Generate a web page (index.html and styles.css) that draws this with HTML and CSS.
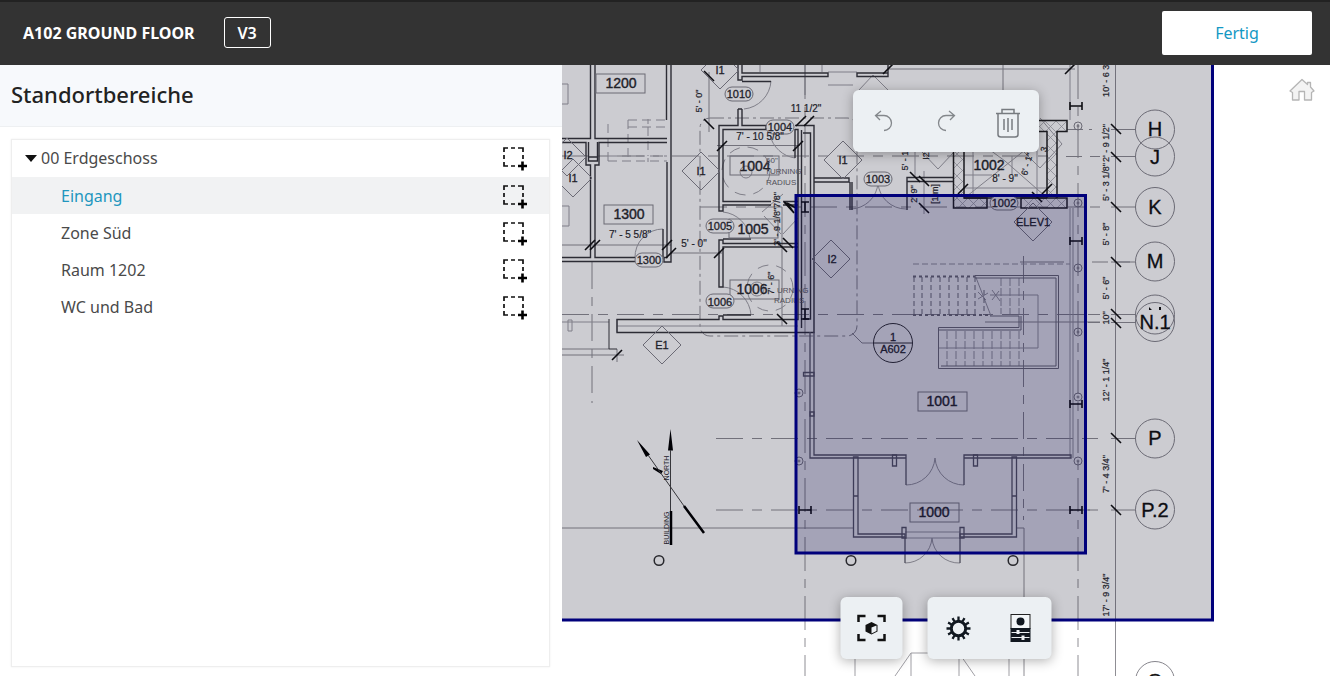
FILE: index.html
```html
<!DOCTYPE html>
<html lang="de">
<head>
<meta charset="utf-8">
<title>A102 Ground Floor</title>
<link rel="stylesheet" href="styles.css">
</head>
<body>
<svg class="defs" aria-hidden="true">
  <symbol id="area" viewBox="0 0 26 26">
    <path d="M2 7V3h4M9 3h4M16 3h5v4M21 10v4M2 10v4M2 17v4h4M9 21h4" fill="none" stroke="#111" stroke-width="1.700"/>
    <path d="M20.500 16.500v9M16 21h9" stroke="#000" stroke-width="2.600"/>
  </symbol>
</svg>
<div class="app">
  <header class="topbar">
    <h1 class="sheet">A102 GROUND FLOOR</h1>
    <button class="version" type="button">V3</button>
    <button class="done" type="button">Fertig</button>
  </header>
  <main class="work">
    <section class="side">
      <h2 class="side-title">Standortbereiche</h2>
      <ul class="tree">
        <li class="row root"><svg class="caret" viewBox="0 0 12 8"><path d="M0 1h12L6 8z"/></svg><span class="name">00 Erdgeschoss</span><button class="add" type="button" aria-label="Bereich zeichnen"><svg><use href="#area"/></svg></button></li>
        <li class="row selected"><span class="name">Eingang</span><button class="add" type="button" aria-label="Bereich zeichnen"><svg><use href="#area"/></svg></button></li>
        <li class="row"><span class="name">Zone Süd</span><button class="add" type="button" aria-label="Bereich zeichnen"><svg><use href="#area"/></svg></button></li>
        <li class="row"><span class="name">Raum 1202</span><button class="add" type="button" aria-label="Bereich zeichnen"><svg><use href="#area"/></svg></button></li>
        <li class="row"><span class="name">WC und Bad</span><button class="add" type="button" aria-label="Bereich zeichnen"><svg><use href="#area"/></svg></button></li>
      </ul>
    </section>
    <section class="viewer">
      <svg class="plan" viewBox="562 65 768 611" preserveAspectRatio="xMinYMin slice">
        <defs>
          <path id="dia" d="M0-19L19 0L0 19L-19 0z"/>
          <path id="tick" d="M-5-5L5 5"/>
          <path id="slash" d="M-5 5L5-5"/>
          <rect id="pill" x="-14" y="-7" width="28" height="14" rx="7"/>
          <rect id="tag" x="-24" y="-10" width="49" height="19"/>
          <path id="beam" d="M-6 0H6M-6-4V4M6-4V4"/>
          <g id="bolt"><circle r="4"/><circle r="1"/></g>
          <pattern id="hatch" width="11" height="11" patternUnits="userSpaceOnUse"><path d="M0 0L11 11M11 0L0 11" stroke="#a3a2a8" stroke-width=".7"/></pattern>
        </defs>

        <g class="grid">
          <path d="M562 156H1048M700 207H1048M562 314.500H1090M716 438.500H1090M716 510H1090" stroke-dasharray="27 9 10 9"/>
          <path d="M805 65V676M1078 65V676" stroke-dasharray="34 8 9 8"/>
          <path d="M592 262V403M1023.500 256V520" stroke-dasharray="27 8 9 8"/>
          <path d="M985 322H1100M1020 262H1064"/>
          <path d="M1067 129.500H1092M1066 156.500H1083M1090 156.500H1100M1068 207H1100M1092 262H1136M1066 314.500H1100M1088 322.500H1100M1088 438.500H1098M1088 510H1098" stroke-dasharray="16 6"/>
          <path d="M1111 129.500H1136M1111 156.500H1136M1111 207H1136M1111 262H1136M1111 314.500H1136M1111 322.500H1136M1111 438.500H1136M1111 510H1136M1115.500 65V676"/>
          <path d="M562 245H671M671 253H722M709 72V132M717 145.500H800M782 207V326M888 69H1075M1003 65V90M805 65V95M562 528H853M1016 528H1024M562 349H609M562 355H624M617 349V362"/>
          <path d="M1024 528V676"/>
          <rect x="700" y="118" width="157" height="218" rx="10" stroke-dasharray="14 4 3 4"/>
          <path d="M852 333L862 343H873"/>
        </g>

        <g class="thin">
          <path d="M562 84H568V104H562M562 206H569V226H562"/>
          <path d="M608 124V161M608 156H667M628 120V161M648 119V124M648 127V156M648 158V162M628 120H667M628 127H667M608 161H667" stroke-dasharray="9 5"/>
          <path d="M760 65V72M822 65V72"/>
          <path d="M771 81A30 30 0 0 1 744 109M663 229A28 28 0 0 0 635 258M795 158A30 30 0 0 1 770 135M723 212A30 30 0 0 1 750 239M723 287A30 30 0 0 1 751 315"/>
          <circle cx="746" cy="171" r="24" stroke-dasharray="11 8"/>
          <circle cx="746" cy="172" r="6"/>
          <circle cx="770" cy="288" r="23" stroke-dasharray="11 8"/>
          <circle cx="757" cy="289" r="7"/>
          <path d="M762 212L783 194M764 216L781 234M783 234L798 218"/>
          <path d="M878 183A28 28 0 0 1 851 209M878 183A28 28 0 0 0 906 209"/>
          <path d="M828 72H857M828 85H853M859 90L873 75L888 90M915 152V176M922 152L938 169L953 153"/>
          <path d="M924 171V214M973 150V198M1037 132V198M964 188H1047M964 175H992M1012 156V175M967 196L1025 150M1045 196L1005 161L990 150M1040 118L1062 144L1040 168L1022 150"/>
          <path d="M617 326H798M617 332V319M562 322H609M568 320H572V331H568z"/>
          <path d="M1070 65V120M1070 208V458M1073 208V458"/>
          <path d="M913 264H1070" stroke-dasharray="6 3"/>
          <path d="M990 295H1038V348H938M975 275L991 316M978 292L986 300M978 299L988 293M992 290L1000 301M992 300L999 291"/>
          <path d="M1001 278V314M1010 278V314M1019 278V314M947 331V366M956 331V366M965 331V366M974 331V366M983 331V366M992 331V366M1001 331V366M1010 331V366M1019 331V366" stroke-dasharray="8 2"/>
          <path d="M906 485A29 29 0 0 0 935 458A29 29 0 0 0 964 485M905 563A27 27 0 0 0 932 538A27 27 0 0 0 960 563M905 532H960M905 538H960"/>
          <path d="M855 659V676M911 653V676M959 653V676M895 676L911 653H959L975 676M1009 659V676"/>
        </g>

        <g class="stair">
          <path d="M975 275.500H1058.500V368.500H938.500V327.500H1019V316H990M975 278H1056V366H941M938 330H1021V316"/>
          <path d="M914 277V315M922 277V315M931 277V315M940 277V315M949 277V315M958 277V315M967 277V315M975 277V315M984 290V315" stroke-dasharray="5 3"/>
          <path d="M913 276.500H975M913 315H991" stroke-dasharray="3 3" stroke-width="2"/>
        </g>

        <g class="wall">
          <path d="M590.500 65V138.500H562M595 65V138.500H667M666.500 65V120M671 65V262H664V257.500H667V162"/>
          <path d="M562 142.500H586V165H590.500V257.500H562M667 142.500H599V165H595V257.500H635M562 261.500H635M663 229V257"/>
          <path d="M588.500 142V161H597.500V142M589 157H597"/>
          <path d="M738 65V80H742V76.500H828V73H742V65M742 81.500H771M888 65V76.500H857V73H888"/>
          <path d="M738 109V125.500H719V211H723V205H771M742 109V125.500H766V129.500H723V201.500H771M738 109H742M795 125.500H814V332.500H617V319.500H719V316H723V319.500H798V129.500H795M795 129V158M783 201.500H798M783 205H798"/>
          <path d="M801.500 130V328M803 133H810.500V319H803M798 243.500H723V240H719V287H723V247H798M723 239H751M723 315H751"/>
          <path d="M814 178H849V182H814M850 182V210M852 182V210M907 181V210M953 177.500H907V181.500H953"/>
          <path d="M609 319V349H617" stroke-width="1"/>
        </g>
        <g class="shaft">
          <path d="M953.500 150H964V198H987V208H953.500zM1021 198H1067V208H1021zM1037 120.500H1067V131.500H1057V198H1047V131.500H1037z"/>
          <path d="M964 198H1047"/>
        </g>

        <g class="entry">
          <path d="M810 332V458H906V455H814V332M964 455H1071V458H964zM906 455V485M964 455V485"/>
          <path d="M853.500 457V537H905V534H858V457zM1012 457V534H960V537H1016.500V457zM853 496H858M1012 496H1016M905 538V563M960 538V563"/>
          <path d="M892.500 455H896.500V466H892.500zM973.500 455H977.500V466H973.500zM902 527.500H906V538H902zM960 527.500H964V538H960zM803.500 372.500H814V376H803.500zM810 412H814V416H810z"/>
        </g>

        <g class="mark">
          <use href="#dia" x="567" y="157"/><use href="#dia" x="573" y="178"/><use href="#dia" x="701" y="171"/><use href="#dia" x="720" y="70"/><use href="#dia" x="843" y="160"/><use href="#dia" x="831" y="259"/><use href="#dia" x="662" y="345"/><use href="#dia" x="1033" y="222"/>
          <use href="#tag" x="620" y="84"/><use href="#tag" x="628" y="215"/><use href="#tag" x="754" y="166"/><use href="#tag" x="753" y="229"/><use href="#tag" x="754" y="290"/><use href="#tag" x="942" y="402"/><use href="#tag" x="934" y="513"/>
          <g class="filled"><use href="#pill" x="739" y="94"/><use href="#pill" x="780" y="127"/><use href="#pill" x="649" y="260"/><use href="#pill" x="720" y="226"/><use href="#pill" x="720" y="301"/><use href="#pill" x="878" y="179"/><use href="#pill" x="1004" y="203"/></g>
          <circle cx="893" cy="343" r="19.500" stroke="#333"/><path d="M873 343H912" stroke="#333"/>
          <use href="#bolt" x="1078" y="126"/><use href="#bolt" x="1078" y="203"/><use href="#bolt" x="1078" y="268"/><use href="#bolt" x="1078" y="332"/><use href="#bolt" x="1078" y="397"/><use href="#bolt" x="1078" y="461"/><use href="#bolt" x="799" y="393"/><use href="#bolt" x="799" y="461"/>
          <circle cx="1155" cy="129.500" r="19.500"/><circle cx="1155" cy="156.500" r="19.500"/><circle cx="1155" cy="207" r="19.500"/><circle cx="1155" cy="261.500" r="19.500"/><circle cx="1155" cy="314.500" r="19.500"/><circle cx="1155" cy="322" r="19.500"/><circle cx="1155" cy="438.500" r="19.500"/><circle cx="1155" cy="509.500" r="19.500"/><circle cx="1155" cy="681" r="19.500"/>
        </g>

        <g class="ticks">
          <use href="#slash" x="590" y="245"/><use href="#slash" x="595" y="245"/><use href="#slash" x="667" y="245"/><use href="#slash" x="671" y="253"/><use href="#slash" x="719" y="253"/><use href="#slash" x="722" y="146"/><use href="#slash" x="798" y="146"/><use href="#slash" x="801" y="121"/><use href="#slash" x="809" y="121"/><use href="#slash" x="617" y="355"/><use href="#slash" x="888" y="69"/><use href="#slash" x="1070" y="69"/><use href="#slash" x="963" y="189"/><use href="#slash" x="1047" y="189"/>
          <use href="#tick" x="709" y="76"/><use href="#tick" x="709" y="124"/><use href="#tick" x="782" y="247"/><use href="#tick" x="788" y="243"/><use href="#tick" x="782" y="319"/><use href="#tick" x="915" y="177"/><use href="#tick" x="924" y="181"/><use href="#tick" x="924" y="208"/><use href="#tick" x="1037" y="197"/>
          <use href="#tick" x="1116" y="129"/><use href="#tick" x="1116" y="157"/><use href="#tick" x="1116" y="207"/><use href="#tick" x="1116" y="262"/><use href="#tick" x="1116" y="314"/><use href="#tick" x="1116" y="323"/><use href="#tick" x="1116" y="438"/><use href="#tick" x="1116" y="510"/>
          <use href="#beam" x="1076" y="106"/><use href="#beam" x="1076" y="241"/><use href="#beam" x="1076" y="404"/><use href="#beam" x="1076" y="510"/><use href="#beam" x="805" y="510"/>
          <path d="M801 202H809M801 212H809M805 202V212M801 309H809M801 319H809M805 309V319"/>
          <path d="M784 202L796 208L787 203L794 213z" fill="#111"/>
        </g>

        <g class="north">
          <path d="M670.500 429L668 450.500H673zM637 440L646 457L650 454.500zM653 467L663 471L661 474L653 469z"/>
          <path d="M670.500 450V512M648 455L684 506" stroke="#444"/>
          <path d="M671 511V545M684 506L704 533" stroke="#000" stroke-width="2.500"/>
        </g>
        <g fill="none" stroke="#333" stroke-width="1.500"><circle cx="659" cy="560.500" r="4.800"/><circle cx="851" cy="560.500" r="4.800"/><circle cx="1013" cy="560.500" r="4.800"/></g>

        <g class="room">
          <text x="621" y="88">1200</text><text x="629" y="219">1300</text><text x="755" y="171">1004</text><text x="753" y="234">1005</text><text x="752" y="294">1006</text><text x="989" y="170">1002</text><text x="942" y="406">1001</text><text x="934" y="517">1000</text>
        </g>
        <g class="code">
          <text x="739" y="98">1010</text><text x="780" y="131">1004</text><text x="649" y="264">1300</text><text x="720" y="230">1005</text><text x="720" y="306">1006</text><text x="878" y="183">1003</text><text x="1004" y="207">1002</text>
          <text x="568" y="159">I2</text><text x="573" y="182">I1</text><text x="701" y="175">I1</text><text x="720" y="74">I1</text><text x="843" y="164">I1</text><text x="832" y="263">I2</text><text x="662" y="349">E1</text><text x="1033" y="226">ELEV1</text><text x="893" y="341">1</text><text x="893" y="353">A602</text>
        </g>
        <g class="dim">
          <text x="630" y="238">7' - 5 5/8"</text><text x="694" y="247">5' - 0"</text><text x="760" y="140">7' - 10 5/8"</text><text x="806" y="112">11 1/2"</text><text x="1005" y="182">8' - 9"</text>
        </g>
        <g class="turn">
          <text x="766" y="163">60"</text><text x="765" y="174">TURNING</text><text x="766" y="185">RADIUS</text><text x="777" y="293">URNING</text><text x="774" y="303">RADIUS</text>
        </g>
        <g class="dim upright">
          <text transform="translate(702 101) rotate(-90)">5' - 0"</text><text transform="translate(780 219) rotate(-90)">3' - 9 1/8"7/8"</text><text transform="translate(774 283) rotate(-90)">7' - 6"</text><text transform="translate(908 159) rotate(-90)">5' - 1"</text><text transform="translate(917 194) rotate(-90)">2' 9"</text><text transform="translate(938 194) rotate(-90)">[1 m]</text><text transform="translate(929 156) rotate(-90)">I2</text><text transform="translate(1030 165) rotate(-75)">6' - 1"</text><text transform="translate(1047 150) rotate(-75)">3</text>
          <text transform="translate(1109 77) rotate(-90)">10' - 6 3/8</text><text transform="translate(1109 143) rotate(-90)">2' - 9 1/2"</text><text transform="translate(1109 182) rotate(-90)">5' - 3 1/8"</text><text transform="translate(1109 234) rotate(-90)">5' - 8"</text><text transform="translate(1109 288) rotate(-90)">5' - 6"</text><text transform="translate(1109 318) rotate(-90)">10"</text><text transform="translate(1109 380) rotate(-90)">12' - 1 1/4"</text><text transform="translate(1109 474) rotate(-90)">7' - 4 3/4"</text><text transform="translate(1109 595) rotate(-90)">17' - 9 3/4"</text>
        </g>
        <g class="compass"><text transform="translate(669 468) rotate(-90)">NORTH</text><text transform="translate(669 528) rotate(-90)">BUILDING</text></g>
        <g class="axis">
          <text x="1155" y="136">H</text><text x="1155" y="164">J</text><text x="1155" y="214">K</text><text x="1155" y="268">M</text><text x="1155" y="329">N.1</text><text x="1155" y="445">P</text><text x="1155" y="517">P.2</text><text x="1155" y="688">Q</text>
        </g>
        <path d="M1149 310V307L1152 310zM1159 307H1161V310H1159z" fill="#111"/>

        <rect class="zone outer" x="500" y="40" width="712.500" height="580"/>
        <rect class="zone inner" x="796" y="195.500" width="289.500" height="357.500"/>
      </svg>

      <button class="home" type="button" aria-label="Startansicht"><svg viewBox="0 0 26 24"><path d="M13 1.500L1 13L3.500 14.500V22H10V13.500H15.500V22H22.500V14.500L25 13L21.500 9V4.500H18.500V6.500z" fill="#f3f3f3" stroke="#b5b5b5" stroke-width="1.300" stroke-linejoin="round"/></svg></button>

      <div class="tools top">
        <button type="button" aria-label="Rückgängig"><svg viewBox="0 0 30 30"><path d="M6.500 9.500H15A7.500 7.500 0 0 1 15 24.500M12 5L6.500 9.500L11 14" fill="none" stroke="#83878b" stroke-width="1.300"/></svg></button>
        <button type="button" aria-label="Wiederholen"><svg viewBox="0 0 30 30"><path d="M23.500 9.500H15A7.500 7.500 0 0 0 15 24.500M18 5L23.500 9.500L19 14" fill="none" stroke="#83878b" stroke-width="1.300"/></svg></button>
        <button type="button" aria-label="Löschen"><svg viewBox="0 0 30 34"><path d="M3 9.500H27M9 9V5.500H21V9M5 10V30.500Q5 33 8 33H22Q25 33 25 30.500V10M11 15V26M15 14V28M19 15V26" fill="none" stroke="#777b80" stroke-width="1.500"/></svg></button>
      </div>
      <div class="bottom">
        <div class="tools">
          <button type="button" aria-label="Einpassen"><svg viewBox="0 0 30 30"><path d="M2 9V3H9M21 3H28V9M28 21V27H21M9 27H2V21" fill="none" stroke="#111" stroke-width="2.500"/><path d="M15 9L21 12V18.500L15 21.500L9 18.500V12z" fill="#111"/><path d="M15 14.500L20 12.500V18L15 20.500z" fill="#ecf0f3"/></svg></button>
        </div>
        <div class="tools">
          <button type="button" aria-label="Einstellungen"><svg viewBox="0 0 30 30"><g fill="none" stroke="#111820"><circle cx="15" cy="15.500" r="7.200" stroke-width="3"/><path d="M15 3.500V7.500M15 23.500V27.500M3 15.500H7M23 15.500H27M9 5.100L11 8.500M19 22.500L21 25.900M4.600 9.500L8 11.500M22 19.500L25.400 21.500M4.600 21.500L8 19.500M22 11.500L25.400 9.500M9 25.900L11 22.500M19 8.500L21 5.100" stroke-width="2.300"/></g></svg></button>
          <button type="button" aria-label="Eigenschaften"><svg viewBox="0 0 30 30"><rect x="5.500" y="1.500" width="19" height="14" fill="#f3f6f8" stroke="#222" stroke-width="1"/><circle cx="15" cy="8.500" r="4" fill="#111820"/><path d="M5 15H25V29H5z" fill="#111820"/><path d="M6 19.500H24M6 24.500H24" stroke="#ecf0f3"/><path d="M11 17H14V21H11zM16 22.500H19V27H16z" fill="#ecf0f3"/></svg></button>
        </div>
      </div>
    </section>
  </main>
</div>
</body>
</html>
```
FILE: styles.css
```css
* { box-sizing: border-box; }
body { margin: 0; font-family: "Noto Sans", sans-serif; font-size: 16px; color: #4a4a4a; background: #fff; }
button { padding: 0; border: 0; background: none; font: inherit; color: inherit; cursor: pointer; }
svg { display: block; }
.defs { position: absolute; width: 0; height: 0; }
.app { display: flex; flex-direction: column; height: 100vh; }

.topbar { display: flex; align-items: center; height: 65px; padding: 0 18px 2px 23px; background: #333; border-top: 2px solid #222; color: #fff; }
.sheet { margin: 0 29px 0 0; font-size: 16px; line-height: 24px; font-weight: 700; }
.version { width: 47px; height: 31px; border: 1px solid #fff; border-radius: 3px; font-weight: 600; }
.done { width: 150px; height: 44px; margin-left: auto; background: #fff; border-radius: 2px; color: #1498c4; }

.work { flex: 1; min-height: 0; display: grid; grid-template-columns: 281fr 384fr; }
.side { display: flex; flex-direction: column; min-width: 0; }
.side-title { margin: 0; padding: 14px 12px 17px 11px; border-bottom: 1px solid #eef0f2; background: #f7f9fc; font-size: 22px; line-height: 30px; font-weight: 500; color: #222; }
.tree { flex: 1; margin: 12px 12px 9px 11px; padding: 0; list-style: none; border: 1px solid #eee; box-shadow: 0 0 2px #eee; }
.row { display: flex; align-items: center; height: 37px; padding: 0 21px 0 49px; }
.row.root { padding-left: 13px; padding-bottom: 2px; }
.row.selected { background: #f1f2f3; color: #2196be; }
.caret { width: 12px; height: 8px; margin-right: 4px; fill: #111; }
.name { flex: 1; }
.add, .add svg { width: 26px; height: 26px; }

.viewer { position: relative; min-width: 0; overflow: hidden; }
.plan { position: absolute; inset: 0; width: 100%; height: 100%; fill: none; font-family: "Liberation Sans", Arial, sans-serif; }
.grid { stroke: #8f8e94; stroke-width: 1; }
.thin { stroke: #a09fa5; stroke-width: 1; }
.stair { stroke: #77767f; stroke-width: 1; }
.wall { stroke: #38383d; stroke-width: 1.4; }
.shaft { stroke: #222; stroke-width: 1.5; fill: url(#hatch); }
.entry { stroke: #605f6b; stroke-width: 1.3; }
.mark { stroke: #86858c; stroke-width: 1; }
.filled { fill: #fff; }
.ticks { stroke: #111; stroke-width: 1.6; }
.north { fill: #000; }
.plan text { stroke: none; fill: #2a2a2e; text-anchor: middle; }
.plan .room text { font-size: 14px; stroke: #2a2a2e; stroke-width: 0.4; }
.plan .code text { font-size: 11px; stroke: #2a2a2e; stroke-width: 0.3; }
.plan .dim text { font-size: 10px; stroke: #2a2a2e; stroke-width: 0.2; }
.plan .upright text { font-size: 9px; }
.plan .turn text { font-size: 8px; fill: #66656b; text-anchor: start; }
.compass text { font-size: 7px; }
.plan .axis text { font-size: 20px; fill: #111; stroke: #111; stroke-width: 0.3; }
.zone { stroke: #00007b; stroke-width: 3; fill-opacity: 0.2; }
.outer { fill: #000018; }
.inner { fill: #06004e; }

.home { position: absolute; top: 13px; right: 15px; }
.home svg { width: 26px; height: 24px; }
.tools { display: flex; background: #ecf0f3; border-radius: 6px; box-shadow: 0 2px 12px rgba(0, 0, 0, 0.3); }
.tools button { display: flex; align-items: center; justify-content: center; width: 62px; height: 62px; }
.tools svg { width: 30px; height: 30px; }
.top { position: absolute; top: 25px; left: 50%; transform: translateX(-50%); }
.top svg { height: 34px; }
.bottom { position: absolute; bottom: 17px; left: 50%; display: flex; gap: 25px; transform: translateX(-50%); }
```
